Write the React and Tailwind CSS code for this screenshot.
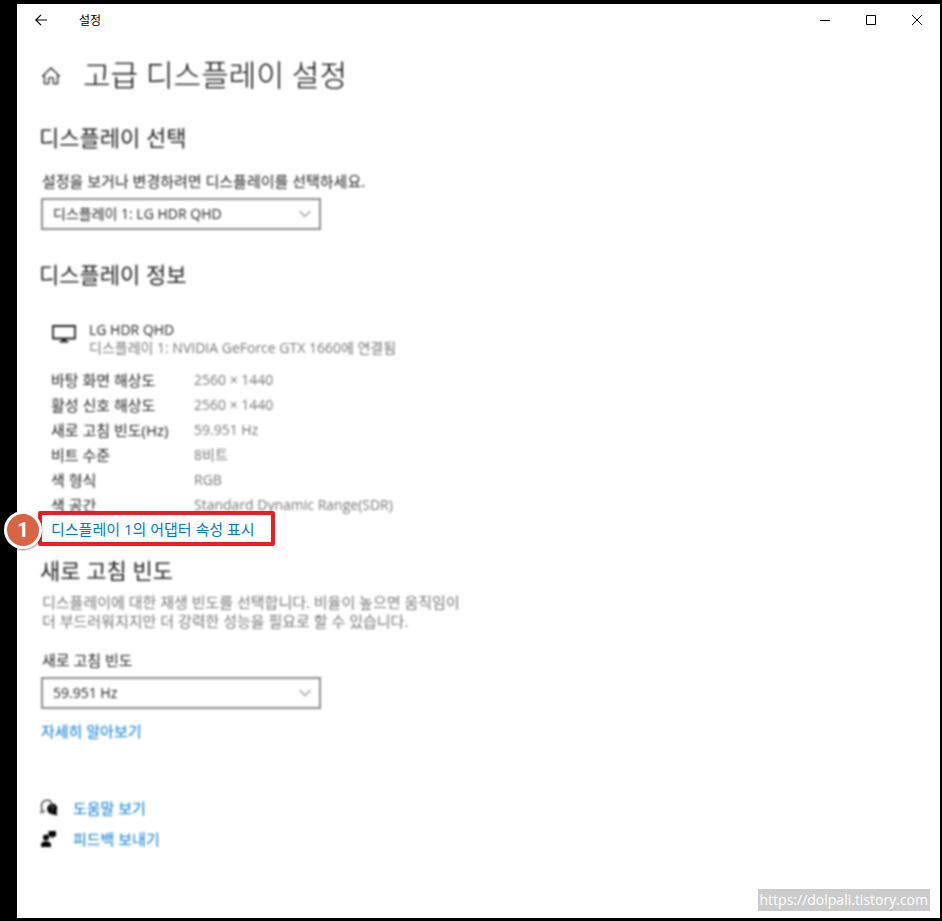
import { useState } from 'react';

const displayInfo = [
  { label: '바탕 화면 해상도', value: '2560 × 1440' },
  { label: '활성 신호 해상도', value: '2560 × 1440' },
  { label: '새로 고침 빈도(Hz)', value: '59.951 Hz' },
  { label: '비트 수준', value: '8비트' },
  { label: '색 형식', value: 'RGB' },
  { label: '색 공간', value: 'Standard Dynamic Range(SDR)' },
];

function TitleBar() {
  return (
    <header className="flex h-8 items-center text-black">
      <button type="button" aria-label="뒤로" className="flex h-8 w-12 items-center justify-center">
        <svg className="h-3 w-3" viewBox="0 0 12 12" fill="none" stroke="currentColor">
          <path strokeWidth={1.2} d="M12 6H.8M6 .8L.8 6 6 11.2" />
        </svg>
      </button>
      <span className="ml-3.5 pt-px text-[12px]">설정</span>
      <div className="ml-auto flex">
        <button type="button" aria-label="최소화" className="flex h-8 w-[46px] items-center justify-center">
          <svg className="h-2.5 w-2.5" viewBox="0 0 10 10" fill="none" stroke="currentColor">
            <path d="M0 5.5h10" />
          </svg>
        </button>
        <button type="button" aria-label="최대화" className="flex h-8 w-[46px] items-center justify-center">
          <svg className="h-2.5 w-2.5" viewBox="0 0 10 10" fill="none" stroke="currentColor">
            <path d="M.5.5h9v9h-9z" />
          </svg>
        </button>
        <button type="button" aria-label="닫기" className="flex h-8 w-[46px] items-center justify-center">
          <svg className="h-2.5 w-2.5" viewBox="0 0 10 10" fill="none" stroke="currentColor">
            <path d="M0 0l10 10M10 0L0 10" />
          </svg>
        </button>
      </div>
    </header>
  );
}

function SelectBox({ id, value, onChange, options }) {
  return (
    <div className="relative ml-px w-full max-w-[280px]">
      <select
        id={id}
        value={value}
        onChange={(e) => onChange(e.target.value)}
        className="block h-8 w-full appearance-none border-2 border-[#8c8c8c] bg-white pr-8 pl-2.5 text-[14px] text-[#222]"
      >
        {options.map((option) => (
          <option key={option}>{option}</option>
        ))}
      </select>
      <svg
        className="pointer-events-none absolute top-3 right-2.5 h-2 w-3"
        viewBox="0 0 12 8"
        fill="none"
        stroke="#444"
      >
        <path d="M.5 1L6 6.5 11.5 1" />
      </svg>
    </div>
  );
}

function HomeIcon() {
  return (
    <svg className="h-5 w-5" viewBox="0 0 20 20" fill="none" stroke="#222" strokeWidth={1.3}>
      <path d="M1 11.6L10 3l9 8.6M3.4 9.8v8.9h4.2v-5a1 1 0 0 1 1-1h2.8a1 1 0 0 1 1 1v5h4.2V9.8" />
    </svg>
  );
}

function MonitorIcon() {
  return (
    <svg className="mt-1 h-[18px] w-6" viewBox="0 0 24 18">
      <path d="M1 1h22v12.5H1z" fill="none" stroke="#222" strokeWidth={1.8} />
      <path d="M10 13.5h4v2.2h2.5v1.8h-9v-1.8H10z" fill="#222" />
    </svg>
  );
}

function HelpIcon() {
  return (
    <svg className="h-[18px] w-[18px]" viewBox="0 0 18 18">
      <path
        d="M5 12.2L1.2 13.4l1-3.6A5.5 5.5 0 1 1 12 4"
        fill="none"
        stroke="#111"
        strokeWidth={1.1}
      />
      <path d="M12 4.4a5.2 5.2 0 0 1 4.5 7.8l.8 4.4-3.8-1.2A5.3 5.3 0 1 1 12 4.4z" fill="#000" />
      <path
        d="M10.4 8.3c0-2 3.2-1.9 3.2 0 0 1.2-1.6 1.2-1.6 2.5M12 12v1.3"
        fill="none"
        stroke="#aaa"
        strokeWidth={1}
      />
    </svg>
  );
}

function FeedbackIcon() {
  return (
    <svg className="h-[18px] w-[18px]" viewBox="0 0 18 18" fill="#000">
      <path d="M8.5 1H16v5.6h-2.2L11.6 9V6.6H8.5z" />
      <circle cx="6" cy="7.4" r="3" />
      <path d="M1 17v-2.2c0-4.6 10-4.6 10 0V17z" />
    </svg>
  );
}

export default function App() {
  const [display, setDisplay] = useState('디스플레이 1: LG HDR QHD');
  const [refreshRate, setRefreshRate] = useState('59.951 Hz');

  return (
    <div className="flex min-h-screen flex-col bg-black pt-1 pr-0.5 pb-[3px] pl-[17px] font-['Open_Sans','Noto_Sans_CJK_KR',sans-serif]">
      <div className="relative grow bg-white">
        <TitleBar />

        <main className="px-[23px] pt-[19px] pb-16 text-[15px] leading-5 text-[#222]">
          <div className="blur-[1px]">
            <div className="flex h-10 items-center gap-[22px]">
              <a href="#home" aria-label="홈" className="ml-px">
                <HomeIcon />
              </a>
              <h1 className="text-[30px] leading-10 font-light text-black">고급 디스플레이 설정</h1>
            </div>

            {/* Display picker */}
            <h2 className="mt-7 -ml-px text-[22px] leading-7">디스플레이 선택</h2>
            <label htmlFor="display" className="mt-5 mb-[7px] ml-0.5 block">
              설정을 보거나 변경하려면 디스플레이를 선택하세요.
            </label>
            <SelectBox
              id="display"
              value={display}
              onChange={setDisplay}
              options={['디스플레이 1: LG HDR QHD']}
            />

            {/* Display info */}
            <h2 className="mt-[30px] -ml-px text-[22px] leading-7">디스플레이 정보</h2>
            <div className="mt-[33px] ml-3 flex gap-[13px]">
              <MonitorIcon />
              <div className="text-[14px] leading-[18px]">
                <p>LG HDR QHD</p>
                <p className="text-[#777]">디스플레이 1: NVIDIA GeForce GTX 1660에 연결됨</p>
              </div>
            </div>
            <table className="mt-2.5 ml-[11px] text-left text-[14px]">
              <tbody>
                {displayInfo.map((row) => (
                  <tr key={row.label} className="h-[25px]">
                    <th scope="row" className="w-[143px] p-0 text-[15px] font-normal">{row.label}</th>
                    <td className="p-0 text-[#777]">{row.value}</td>
                  </tr>
                ))}
              </tbody>
            </table>
          </div>

          {/* Highlighted step */}
          <div className="relative z-10 -mt-1.5 -ml-0.5 w-fit">
            <a
              href="#adapter"
              className="flex h-[35px] items-center rounded-xs border-4 border-[#ed1c24] bg-white pr-4 pl-[9px] text-[#0078d7]"
            >
              디스플레이 1의 어댑터 속성 표시
            </a>
            <span className="absolute top-0 -left-[34px] flex h-[38px] w-[38px] items-center justify-center rounded-full border-3 border-white bg-[#d96444] font-[Roboto,sans-serif] text-[21px] font-bold text-white shadow-[0_1px_2px_rgba(0,0,0,0.5)]">
              1
            </span>
          </div>

          {/* Refresh rate */}
          <div className="blur-[1px]">
            <h2 className="mt-2.5 text-[22px] leading-7">새로 고침 빈도</h2>
            <p className="mt-[9px] ml-0.5 max-w-[440px] leading-[19px] text-[#777]">
              디스플레이에 대한 재생 빈도를 선택합니다. 비율이 높으면 움직임이
              <br />더 부드러워지지만 더 강력한 성능을 필요로 할 수 있습니다.
            </p>
            <label htmlFor="refresh-rate" className="mt-[19px] mb-[7px] ml-0.5 block">
              새로 고침 빈도
            </label>
            <SelectBox
              id="refresh-rate"
              value={refreshRate}
              onChange={setRefreshRate}
              options={['59.951 Hz']}
            />
            <a href="#learn-more" className="mt-3 ml-px block w-fit text-[#0078d7]">자세히 알아보기</a>

            <nav className="mt-[51px] text-[#0078d7]">
              <a href="#help" className="flex h-[31px] w-fit items-center gap-[15px]">
                <HelpIcon />
                도움말 보기
              </a>
              <a href="#feedback" className="flex h-[31px] w-fit items-center gap-[15px]">
                <FeedbackIcon />
                피드백 보내기
              </a>
            </nav>
          </div>
        </main>

        <span className="absolute right-2.5 bottom-[7px] bg-[#cbcbcb] px-0.5 text-[14px] leading-[22px] text-white">
          https://dolpali.tistory.com
        </span>
      </div>
    </div>
  );
}
